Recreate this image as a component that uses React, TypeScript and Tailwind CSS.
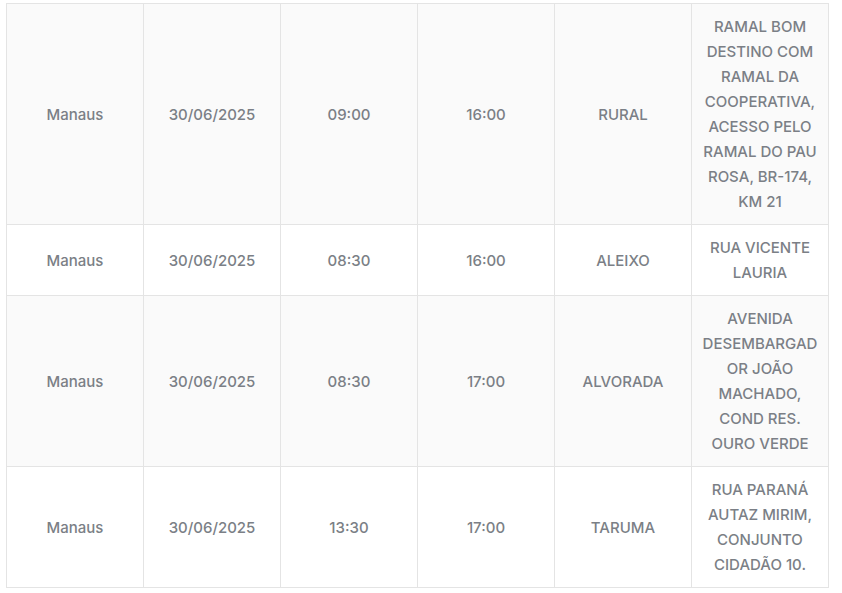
import React from 'react'

type Row = {
  cidade: string
  data: string
  inicio: string
  fim: string
  bairro: string
  endereco: string[]
  striped: boolean
}

const rows: Row[] = [
  {
    cidade: 'Manaus',
    data: '30/06/2025',
    inicio: '09:00',
    fim: '16:00',
    bairro: 'RURAL',
    endereco: [
      'RAMAL BOM',
      'DESTINO COM',
      'RAMAL DA',
      'COOPERATIVA,',
      'ACESSO PELO',
      'RAMAL DO PAU',
      'ROSA, BR-174,',
      'KM 21',
    ],
    striped: true,
  },
  {
    cidade: 'Manaus',
    data: '30/06/2025',
    inicio: '08:30',
    fim: '16:00',
    bairro: 'ALEIXO',
    endereco: ['RUA VICENTE', 'LAURIA'],
    striped: false,
  },
  {
    cidade: 'Manaus',
    data: '30/06/2025',
    inicio: '08:30',
    fim: '17:00',
    bairro: 'ALVORADA',
    endereco: ['AVENIDA', 'DESEMBARGAD', 'OR JOÃO', 'MACHADO,', 'COND RES.', 'OURO VERDE'],
    striped: true,
  },
  {
    cidade: 'Manaus',
    data: '30/06/2025',
    inicio: '13:30',
    fim: '17:00',
    bairro: 'TARUMA',
    endereco: ['RUA PARANÁ', 'AUTAZ MIRIM,', 'CONJUNTO', 'CIDADÃO 10.'],
    striped: false,
  },
]

const cell = 'border border-[#e4e4e4] px-2 py-[10px] text-center align-middle'

export default function App() {
  return (
    <div className="min-h-screen bg-white pl-[6px] pt-[3px] font-['Inter',sans-serif] text-[15px] leading-[25px] font-medium text-[#7b7f86]">
      <table className="w-[823px] table-fixed border-collapse">
        <tbody>
          {rows.map((r, i) => (
            <tr key={i} className={r.striped ? 'bg-[#fafafa]' : 'bg-white'}>
              <td className={cell}>{r.cidade}</td>
              <td className={cell}>{r.data}</td>
              <td className={cell}>{r.inicio}</td>
              <td className={cell}>{r.fim}</td>
              <td className={cell}>{r.bairro}</td>
              <td className={cell}>
                {r.endereco.map((l, j) => (
                  <div key={j} className="whitespace-nowrap">
                    {l}
                  </div>
                ))}
              </td>
            </tr>
          ))}
        </tbody>
      </table>
    </div>
  )
}
